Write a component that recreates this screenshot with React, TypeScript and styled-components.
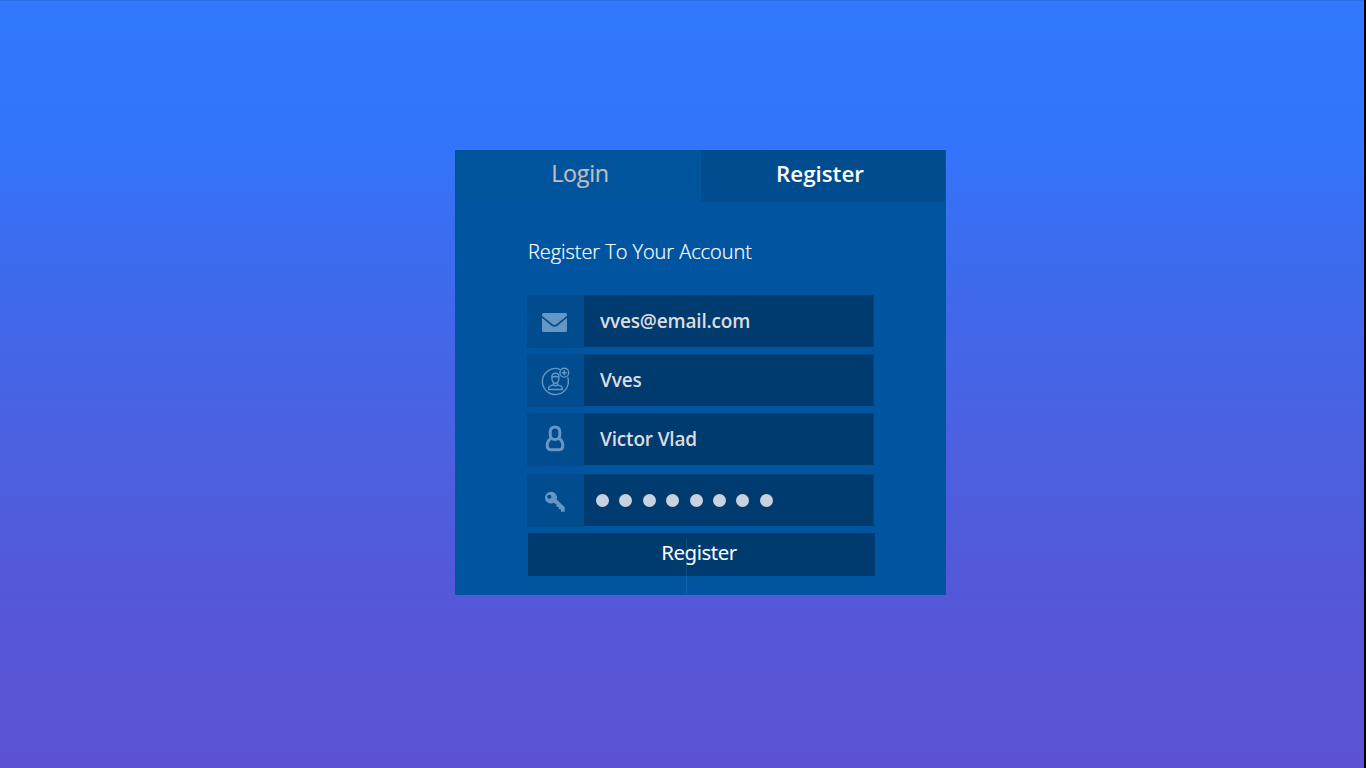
import React from 'react';
import styled, { createGlobalStyle } from 'styled-components';

const GlobalStyle = createGlobalStyle`
  * { box-sizing: border-box; }
  body { margin: 0; background: #000; font-family: 'Open Sans', 'Noto Sans', sans-serif; }
`;

const Page = styled.main`
  height: 768px;
  width: 1364px;
  padding: 150px 0 0 455px;
  overflow: hidden;
  background: linear-gradient(180deg, #2f79ff 0, #3374fa 145px, #4069ea 300px, #4b60e0 450px, #5756d6 640px, #5b52d2 768px);
  box-shadow: inset 0 1px #2c6fe8;
`;

const Card = styled.section`
  position: relative;
  width: 491px;
  height: 445px;
  background: #0054a0;
`;

const Tabs = styled.nav`
  display: flex;
  height: 52px;
  padding-right: 1px;
`;

const Tab = styled.button<{ $active?: boolean }>`
  width: ${p => (p.$active ? 244 : 246)}px;
  height: 52px;
  border: 0;
  padding: ${p => (p.$active ? '0 6px 6px 0' : '0 0 6px 4px')};
  background: ${p => (p.$active ? '#004c8e' : '#00549b')};
  color: ${p => (p.$active ? '#fff' : '#c0bcc0')};
  font: ${p => (p.$active ? "600 22.3px 'Open Sans'" : "400 23.3px 'Open Sans'")}, sans-serif;
  letter-spacing: ${p => (p.$active ? 0 : -0.3)}px;
  -webkit-text-stroke: ${p => (p.$active ? 0 : 0.2)}px #c0bcc0;
`;

const Form = styled.div`
  display: flex;
  flex-direction: column;
  padding: 36px 71px 0 72px;
`;

const Title = styled.h1`
  margin: 0 0 30px 1px;
  height: 27px;
  color: #fff;
  font: 300 20px/27px 'Open Sans', sans-serif;
  letter-spacing: -0.06px;
  -webkit-text-stroke: 0.2px #fff;
  white-space: nowrap;
`;

const Field = styled.div<{ $gap: number }>`
  display: flex;
  width: 347px;
  height: 53px;
  margin-bottom: ${p => p.$gap}px;
`;

const IconCell = styled.div`
  width: 57px;
  height: 53px;
  background: #004c8e;
  color: #6696c3;
  svg { display: block; }
`;

const Value = styled.div`
  display: flex;
  align-items: center;
  width: 290px;
  height: 52px;
  padding: 0 0 0 16px;
  background: #003b70;
  box-shadow: inset 0 1px #00447f, inset -1px 0 #00447f;
  color: #dcdce0;
  font: 600 19px 'Open Sans', sans-serif;
  letter-spacing: -0.17px;
`;

const Dots = styled.div`
  display: flex;
  gap: 10.4px;
  margin: 0 0 0 -4px;
`;

const Dot = styled.i`
  width: 13px;
  height: 13px;
  border-radius: 50%;
  background: #c8d3df;
`;

const Submit = styled.button`
  width: 347px;
  height: 43px;
  margin-left: 1px;
  padding: 0 5px 5px 0;
  border: 0;
  background: #003b70;
  color: #fff;
  font: 400 20.4px 'Noto Sans', sans-serif;
  letter-spacing: -0.45px;
`;

const Seam = styled.span`
  position: absolute;
  left: 231px;
  top: 389px;
  width: 1px;
  height: 55px;
  background: rgba(80, 150, 200, 0.2);
`;

const MailIcon = () => (
  <svg width="57" height="53" viewBox="0 0 57 53" fill="currentColor">
    <path d="M16.500 18h22q1.500 0 1.500 1.500v1.200L29.500 29.300q-2 1.500-4 0L15 20.700v-1.200q0-1.500 1.500-1.500z" />
    <path d="M15 22.800l9.500 8q3 2 6 0L40 22.800v13q0 1.200-1.200 1.200h-22.600q-1.200 0-1.200-1.200z" />
  </svg>
);

const ProfileIcon = () => (
  <svg width="57" height="53" viewBox="0 0 57 53" fill="none" stroke="currentColor" strokeWidth="1.4">
    <path d="M33 15.300A13 13 0 1 0 40.700 23.300" />
    <circle cx="37.300" cy="18.700" r="4.400" />
    <path d="M37.300 16.200v5M34.800 18.700h5" strokeWidth="1.600" />
    <path d="M24.900 23.500c-.4-2.800 1.200-4.200 3.500-4.200s3.900 1.400 3.500 4.200c.2 3.500-1.300 5.800-3.500 5.800s-3.700-2.300-3.500-5.800zM24.900 23q3.500-1 7 0" />
    <path d="M26.500 28.800v2.200l-3.200.8q-1.600.5-1.600 2.200v1.500h13.500v-1.500q0-1.700-1.600-2.200l-3.200-.8v-2.200M26.500 31q2 1.600 3.900 0" />
  </svg>
);

const PersonIcon = () => (
  <svg width="57" height="53" viewBox="0 0 57 53" fill="none" stroke="currentColor" strokeWidth="3">
    <path d="M23.200 19c0-3.400 2.200-5.100 4.800-5.100s4.800 1.700 4.800 5.100v2.400c0 3.200-2.100 5.100-4.800 5.100s-4.800-1.900-4.800-5.100z" />
    <path d="M24.200 25.300c-2.600 1.600-4 4-4 7.200 0 2.700 1.200 4.200 3.700 4.200h8.200c2.500 0 3.700-1.500 3.700-4.200 0-3.200-1.400-5.600-4-7.200" />
  </svg>
);

const KeyIcon = () => (
  <svg width="57" height="53" viewBox="0 0 57 53" fill="currentColor">
    <path fillRule="evenodd" d="M18 24a6 6 0 1 1 11.700 1.500l8 7.800v4.500h-3.800v-2.600h-2.200V33h-2.100v-2.200l-2.800-2A6 6 0 0 1 18 24zm2.200-1.200a2.100 2.100 0 1 0 4.200 0 2.100 2.100 0 0 0-4.200 0z" />
  </svg>
);

const fields = [
  { icon: <MailIcon />, value: 'vves@email.com', gap: 6 },
  { icon: <ProfileIcon />, value: 'Vves', gap: 6 },
  { icon: <PersonIcon />, value: 'Victor Vlad', gap: 8 },
];

export default function App() {
  return (
    <>
      <GlobalStyle />
      <Page>
        <Card>
          <Tabs>
            <Tab>Login</Tab>
            <Tab $active>Register</Tab>
          </Tabs>
          <Form>
            <Title>Register To Your Account</Title>
            {fields.map(f => (
              <Field key={f.value} $gap={f.gap}>
                <IconCell>{f.icon}</IconCell>
                <Value>{f.value}</Value>
              </Field>
            ))}
            <Field $gap={6}>
              <IconCell><KeyIcon /></IconCell>
              <Value>
                <Dots>{Array.from({ length: 8 }, (_, i) => <Dot key={i} />)}</Dots>
              </Value>
            </Field>
            <Submit>Register</Submit>
          </Form>
          <Seam />
        </Card>
      </Page>
    </>
  );
}
